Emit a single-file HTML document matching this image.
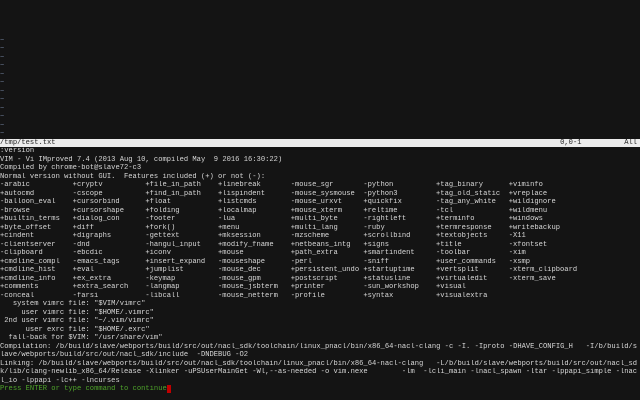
<!DOCTYPE html>
<html><head><meta charset="utf-8"><style>
html,body{margin:0;padding:0;background:#141414;width:640px;height:400px;overflow:hidden}
#t{position:absolute;left:0;top:2.5px;width:640px;font-family:"Liberation Mono",monospace;font-size:7.13px;color:#d8d8d8}
.l{height:8.5px;line-height:8.5px;white-space:pre;overflow:hidden;width:640px}
.tl{color:#6f7f9a}
.st{background:#ececec;color:#222}
.f span{display:inline-block;width:17ch}
.g{color:#4ea32a}
.cur{display:inline-block;width:4.3px;height:8px;background:#c00000;vertical-align:top}
</style></head><body><div id="t">
<div class="l"> </div><div class="l"> </div><div class="l"> </div><div class="l"> </div>
<div class="l tl">~</div><div class="l tl">~</div><div class="l tl">~</div><div class="l tl">~</div>
<div class="l tl">~</div><div class="l tl">~</div><div class="l tl">~</div><div class="l tl">~</div>
<div class="l tl">~</div><div class="l tl">~</div><div class="l tl">~</div><div class="l tl">~</div>
<div class="l st">/tmp/test.txt                                                                                                                      0,0-1          All</div>
<div class="l">:version</div>
<div class="l">VIM - Vi IMproved 7.4 (2013 Aug 10, compiled May  9 2016 16:30:22)</div>
<div class="l">Compiled by chrome-bot@slave72-c3</div>
<div class="l">Normal version without GUI.  Features included (+) or not (-):</div>
<div class="l f"><span>-arabic</span><span>+cryptv</span><span>+file_in_path</span><span>+linebreak</span><span>-mouse_sgr</span><span>-python</span><span>+tag_binary</span><span>+viminfo</span></div>
<div class="l f"><span>+autocmd</span><span>-cscope</span><span>+find_in_path</span><span>+lispindent</span><span>-mouse_sysmouse</span><span>-python3</span><span>+tag_old_static</span><span>+vreplace</span></div>
<div class="l f"><span>-balloon_eval</span><span>+cursorbind</span><span>+float</span><span>+listcmds</span><span>-mouse_urxvt</span><span>+quickfix</span><span>-tag_any_white</span><span>+wildignore</span></div>
<div class="l f"><span>-browse</span><span>+cursorshape</span><span>+folding</span><span>+localmap</span><span>+mouse_xterm</span><span>+reltime</span><span>-tcl</span><span>+wildmenu</span></div>
<div class="l f"><span>+builtin_terms</span><span>+dialog_con</span><span>-footer</span><span>-lua</span><span>+multi_byte</span><span>-rightleft</span><span>+terminfo</span><span>+windows</span></div>
<div class="l f"><span>+byte_offset</span><span>+diff</span><span>+fork()</span><span>+menu</span><span>+multi_lang</span><span>-ruby</span><span>+termresponse</span><span>+writebackup</span></div>
<div class="l f"><span>+cindent</span><span>+digraphs</span><span>-gettext</span><span>+mksession</span><span>-mzscheme</span><span>+scrollbind</span><span>+textobjects</span><span>-X11</span></div>
<div class="l f"><span>-clientserver</span><span>-dnd</span><span>-hangul_input</span><span>+modify_fname</span><span>+netbeans_intg</span><span>+signs</span><span>+title</span><span>-xfontset</span></div>
<div class="l f"><span>-clipboard</span><span>-ebcdic</span><span>+iconv</span><span>+mouse</span><span>+path_extra</span><span>+smartindent</span><span>-toolbar</span><span>-xim</span></div>
<div class="l f"><span>+cmdline_compl</span><span>-emacs_tags</span><span>+insert_expand</span><span>-mouseshape</span><span>-perl</span><span>-sniff</span><span>+user_commands</span><span>-xsmp</span></div>
<div class="l f"><span>+cmdline_hist</span><span>+eval</span><span>+jumplist</span><span>-mouse_dec</span><span>+persistent_undo</span><span>+startuptime</span><span>+vertsplit</span><span>-xterm_clipboard</span></div>
<div class="l f"><span>+cmdline_info</span><span>+ex_extra</span><span>-keymap</span><span>-mouse_gpm</span><span>+postscript</span><span>+statusline</span><span>+virtualedit</span><span>-xterm_save</span></div>
<div class="l f"><span>+comments</span><span>+extra_search</span><span>-langmap</span><span>-mouse_jsbterm</span><span>+printer</span><span>-sun_workshop</span><span>+visual</span></div>
<div class="l f"><span>-conceal</span><span>-farsi</span><span>-libcall</span><span>-mouse_netterm</span><span>-profile</span><span>+syntax</span><span>+visualextra</span></div>
<div class="l">   system vimrc file: "$VIM/vimrc"</div>
<div class="l">     user vimrc file: "$HOME/.vimrc"</div>
<div class="l"> 2nd user vimrc file: "~/.vim/vimrc"</div>
<div class="l">      user exrc file: "$HOME/.exrc"</div>
<div class="l">  fall-back for $VIM: "/usr/share/vim"</div>
<div class="l">Compilation: /b/build/slave/webports/build/src/out/nacl_sdk/toolchain/linux_pnacl/bin/x86_64-nacl-clang -c -I. -Iproto -DHAVE_CONFIG_H   -I/b/build/s</div>
<div class="l">lave/webports/build/src/out/nacl_sdk/include  -DNDEBUG -O2</div>
<div class="l">Linking: /b/build/slave/webports/build/src/out/nacl_sdk/toolchain/linux_pnacl/bin/x86_64-nacl-clang   -L/b/build/slave/webports/build/src/out/nacl_sd</div>
<div class="l">k/lib/clang-newlib_x86_64/Release -Xlinker -uPSUserMainGet -Wl,--as-needed -o vim.nexe        -lm  -lcli_main -lnacl_spawn -ltar -lppapi_simple -lnac</div>
<div class="l">l_io -lppapi -lc++ -lncurses</div>
<div class="l"><span class="g">Press ENTER or type command to continue</span><span class="cur"></span></div>
</div></body></html>
